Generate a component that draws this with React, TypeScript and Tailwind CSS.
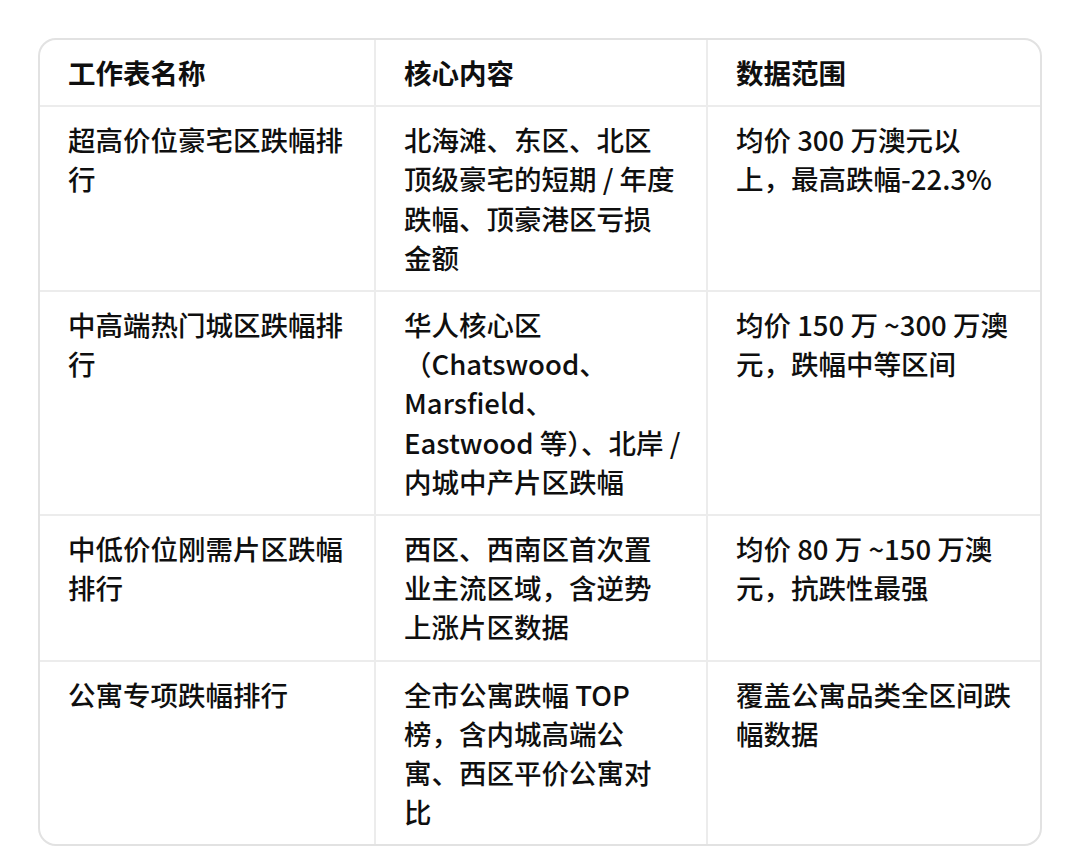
import React from "react";

const rows: string[][][] = [
  [
    ["超高价位豪宅区跌幅排", "行"],
    ["北海滩、东区、北区", "顶级豪宅的短期 / 年度", "跌幅、顶豪港区亏损", "金额"],
    ["均价 300 万澳元以", "上，最高跌幅-22.3%"],
  ],
  [
    ["中高端热门城区跌幅排", "行"],
    ["华人核心区", "（Chatswood、", "Marsfield、", "Eastwood 等）、北岸 /", "内城中产片区跌幅"],
    ["均价 150 万 ~300 万澳", "元，跌幅中等区间"],
  ],
  [
    ["中低价位刚需片区跌幅", "排行"],
    ["西区、西南区首次置", "业主流区域，含逆势", "上涨片区数据"],
    ["均价 80 万 ~150 万澳", "元，抗跌性最强"],
  ],
  [
    ["公寓专项跌幅排行"],
    ["全市公寓跌幅 TOP", "榜，含内城高端公", "寓、西区平价公寓对", "比"],
    ["覆盖公寓品类全区间跌", "幅数据"],
  ],
];

const headers = ["工作表名称", "核心内容", "数据范围"];

function Cell({ lines, first, bold }: { lines: string[]; first: boolean; bold?: boolean }) {
  return (
    <div
      className={
        "px-[28px] py-[13px] text-[27.5px] leading-[39.2px] text-[#0f0f0f] " +
        (bold ? "font-bold " : "font-medium ") +
        (first ? "" : "border-l-2 border-[#ececec]")
      }
    >
      {lines.map((l, i) => (
        <div key={i} className="whitespace-nowrap">
          {l}
        </div>
      ))}
    </div>
  );
}

export default function App() {
  return (
    <div
      className="w-[1080px] h-[850px] bg-white pt-[38px] px-[38px]"
      style={{ fontFamily: '"Noto Sans CJK SC", "Noto Sans", sans-serif' }}
    >
      <div className="border-2 border-[#e2e2e2] rounded-[18px] overflow-hidden">
        <div className="grid grid-cols-[334px_332px_1fr]">
          {headers.map((h, i) => (
            <Cell key={i} lines={[h]} first={i === 0} bold />
          ))}
        </div>
        {rows.map((r, ri) => (
          <div key={ri} className="grid grid-cols-[334px_332px_1fr] border-t-2 border-[#ececec]">
            {r.map((c, ci) => (
              <Cell key={ci} lines={c} first={ci === 0} />
            ))}
          </div>
        ))}
      </div>
    </div>
  );
}
